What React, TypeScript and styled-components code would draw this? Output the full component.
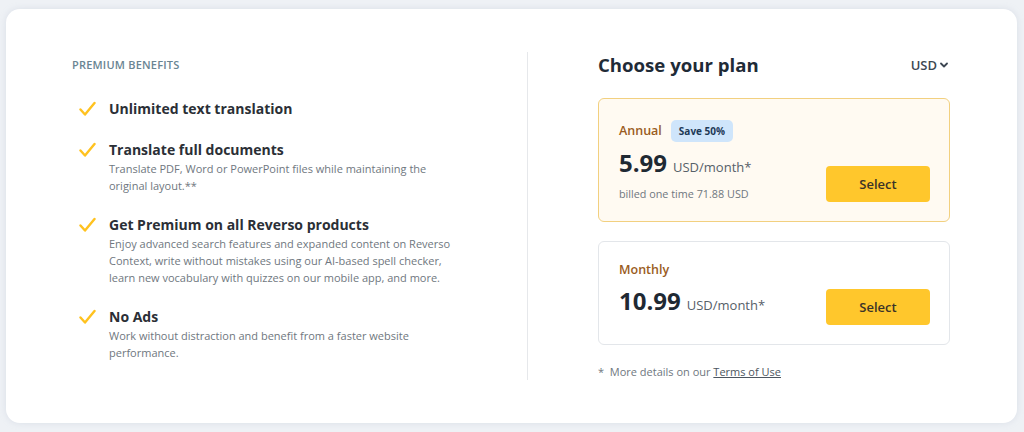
import React from 'react'
import styled, { createGlobalStyle } from 'styled-components'

const GlobalStyle = createGlobalStyle`
  html, body {
    margin: 0;
    padding: 0;
    background: #eef1f5;
    font-family: "Open Sans", "Noto Sans", sans-serif;
  }
`

type Benefit = { title: string; text?: string }

const benefits: Benefit[] = [
  { title: 'Unlimited text translation' },
  {
    title: 'Translate full documents',
    text: 'Translate PDF, Word or PowerPoint files while maintaining the original layout.**',
  },
  {
    title: 'Get Premium on all Reverso products',
    text: 'Enjoy advanced search features and expanded content on Reverso Context, write without mistakes using our AI-based spell checker, learn new vocabulary with quizzes on our mobile app, and more.',
  },
  {
    title: 'No Ads',
    text: 'Work without distraction and benefit from a faster website performance.',
  },
]

function Check() {
  return (
    <svg width="17" height="16" viewBox="0 0 17 16" fill="none" style={{ display: 'block' }}>
      <path d="M1.5 8.5 L6 13.5 L15.5 2" stroke="#ffc21f" strokeWidth="2.4" strokeLinecap="round" strokeLinejoin="round" />
    </svg>
  )
}

export default function App() {
  return (
    <>
      <GlobalStyle />
      <Page>
        <Card>
          <Benefits>
            <Label>Premium benefits</Label>
            <List>
              {benefits.map(b => (
                <Item key={b.title}>
                  <CheckCol><Check /></CheckCol>
                  <div>
                    <ItemTitle>{b.title}</ItemTitle>
                    {b.text && <ItemText>{b.text}</ItemText>}
                  </div>
                </Item>
              ))}
            </List>
          </Benefits>
          <Divider />
          <Plans>
            <Header>
              <Heading>Choose your plan</Heading>
              <Currency>
                USD
                <svg width="8" height="6" viewBox="0 0 8 6" fill="none">
                  <path d="M1 1.5 L4 4.5 L7 1.5" stroke="#3d4752" strokeWidth="1.8" strokeLinecap="round" strokeLinejoin="round" />
                </svg>
              </Currency>
            </Header>
            <PlanCard $highlight>
              <PlanInfo>
                <PlanHead>
                  <PlanName>Annual</PlanName>
                  <Badge>Save 50%</Badge>
                </PlanHead>
                <PriceRow>
                  <Price>5.99</Price>
                  <Unit>USD/month*</Unit>
                </PriceRow>
                <Billed>billed one time 71.88 USD</Billed>
              </PlanInfo>
              <SelectButton>Select</SelectButton>
            </PlanCard>
            <PlanCard>
              <PlanInfo>
                <PlanHead>
                  <PlanName>Monthly</PlanName>
                </PlanHead>
                <PriceRow>
                  <Price>10.99</Price>
                  <Unit>USD/month*</Unit>
                </PriceRow>
              </PlanInfo>
              <SelectButton>Select</SelectButton>
            </PlanCard>
            <Footnote>*&nbsp; More details on our <a href="#">Terms of Use</a></Footnote>
          </Plans>
        </Card>
      </Page>
    </>
  )
}

const Page = styled.div`
  padding: 9px 7px 9px 6px;
`
const Card = styled.div`
  display: flex;
  align-items: stretch;
  height: 414px;
  box-sizing: border-box;
  padding: 43px 67px 43px 66px;
  background: #fff;
  border-radius: 14px;
  box-shadow: 0 0 6px rgba(180, 190, 205, 0.35);
`
const Benefits = styled.div`
  flex: 1;
`
const Label = styled.div`
  font-size: 11px;
  line-height: 26px;
  text-transform: uppercase;
  letter-spacing: 0.2px;
  font-weight: 600;
  color: #6a8593;
`
const List = styled.div`
  display: flex;
  flex-direction: column;
  gap: 21px;
  margin-top: 21px;
`
const Item = styled.div`
  display: flex;
`
const CheckCol = styled.div`
  width: 37px;
  flex: none;
  padding: 2px 0 0 7px;
  box-sizing: border-box;
`
const ItemTitle = styled.div`
  font-size: 14px;
  line-height: 20px;
  font-weight: 700;
  color: #2b2f36;
`
const ItemText = styled.div`
  font-size: 11px;
  line-height: 17px;
  color: #6f7780;
  max-width: 345px;
`
const Divider = styled.div`
  width: 1px;
  background: #e6e8eb;
  margin: 0 70px;
`
const Plans = styled.div`
  width: 352px;
  flex: none;
`
const Header = styled.div`
  display: flex;
  align-items: center;
  justify-content: space-between;
  height: 25px;
`
const Heading = styled.h2`
  margin: 0;
  font-size: 18.6px;
  font-weight: 700;
  color: #1f2b37;
`
const Currency = styled.div`
  display: flex;
  align-items: center;
  gap: 3px;
  font-size: 13px;
  font-weight: 600;
  color: #3d4752;
  margin-right: 2px;
`
const PlanCard = styled.div<{ $highlight?: boolean }>`
  display: flex;
  justify-content: space-between;
  margin-top: ${p => (p.$highlight ? '21px' : '19px')};
  min-height: 104px;
  box-sizing: border-box;
  padding: ${p => (p.$highlight ? '21px' : '18px')} 19px 19px 20px;
  border-radius: 6px;
  border: 1px solid ${p => (p.$highlight ? '#f2d07f' : '#e3e6ea')};
  background: ${p => (p.$highlight ? '#fffaf2' : '#fff')};
`
const PlanInfo = styled.div`
  display: flex;
  flex-direction: column;
`
const PlanHead = styled.div`
  display: flex;
  align-items: center;
  gap: 9px;
  min-height: 20px;
`
const PlanName = styled.div`
  font-size: 12.5px;
  line-height: 18px;
  font-weight: 600;
  color: #9a5c22;
`
const Badge = styled.span`
  display: inline-flex;
  align-items: center;
  height: 22px;
  padding: 0 8px;
  border-radius: 5px;
  background: #cfe5fb;
  color: #1d3957;
  font-size: 10px;
  font-weight: 700;
`
const PriceRow = styled.div`
  display: flex;
  align-items: baseline;
  gap: 6px;
  margin-top: 7px;
  height: 28px;
`
const Price = styled.span`
  font-size: 24px;
  line-height: 28px;
  font-weight: 700;
  color: #1f2933;
`
const Unit = styled.span`
  font-size: 13px;
  line-height: 16px;
  color: #566069;
`
const Billed = styled.div`
  margin-top: 9px;
  font-size: 10.8px;
  line-height: 16px;
  color: #6f7780;
`
const SelectButton = styled.button`
  align-self: flex-end;
  width: 104px;
  height: 36px;
  border: none;
  border-radius: 4px;
  background: #ffc72c;
  color: #3b3328;
  font-family: inherit;
  font-size: 13px;
  font-weight: 600;
  cursor: pointer;
`
const Footnote = styled.div`
  margin-top: 18px;
  font-size: 11px;
  line-height: 18px;
  color: #6f7780;

  a {
    color: #4d5660;
    text-decoration: underline;
  }
`
